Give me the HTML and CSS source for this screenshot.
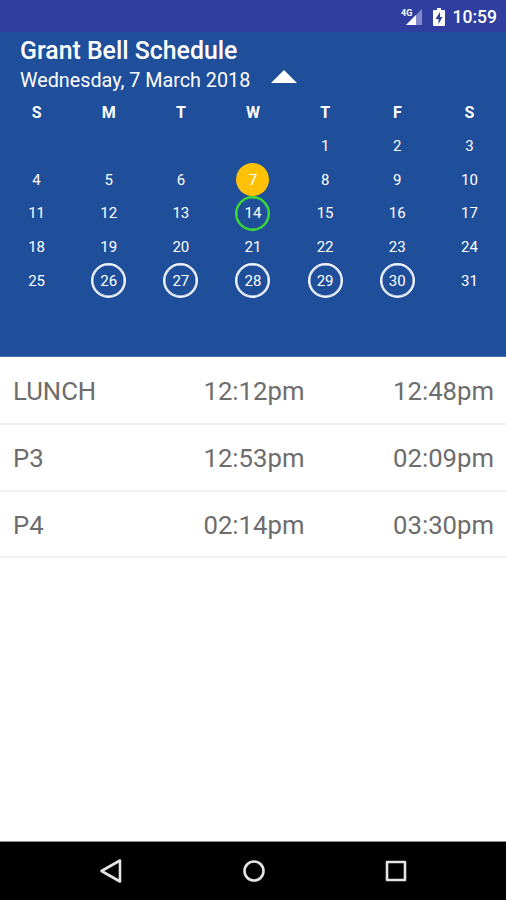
FILE: index.html
```html
<!DOCTYPE html>
<html lang="en"><head><meta charset="utf-8"><title>Grant Bell Schedule</title><link rel="stylesheet" href="styles.css"></head>
<body>
<div class="status">
<svg class="signal" width="22" height="20" viewBox="0 0 22 20"><path d="M21 2V18H5Z" fill="#8587cb"/><path d="M15 8V18H5Z" fill="#fff"/><text x="0" y="9">4G</text></svg>
<svg class="battery" width="12" height="18" viewBox="0 0 12 18"><path d="M4 0h4v2h3q1 0 1 1v14q0 1-1 1H1q-1 0-1-1V3q0-1 1-1h3z" fill="#fff"/><path d="M7 4L2.5 11H5.5V16L9.5 9H7z" fill="#303f9f"/></svg>
<span>10:59</span></div>
<header class="panel">
<h1>Grant Bell Schedule</h1>
<div class="date"><span>Wednesday, 7 March 2018</span><svg width="26" height="13" viewBox="0 0 26 13"><path d="M0 13L13 0L26 13z" fill="#fff"/></svg></div>
<div class="cal">
<b>S</b><b>M</b><b>T</b><b>W</b><b>T</b><b>F</b><b>S</b>
<i></i><i></i><i></i><i></i><i>1</i><i>2</i><i>3</i>
<i>4</i><i>5</i><i>6</i><i><span class="day today">7</span></i><i>8</i><i>9</i><i>10</i>
<i>11</i><i>12</i><i>13</i><i><span class="day green">14</span></i><i>15</i><i>16</i><i>17</i>
<i>18</i><i>19</i><i>20</i><i>21</i><i>22</i><i>23</i><i>24</i>
<i>25</i><i><span class="day">26</span></i><i><span class="day">27</span></i><i><span class="day">28</span></i><i><span class="day">29</span></i><i><span class="day">30</span></i><i>31</i>
</div></header>
<main>
<div class="row"><span>LUNCH</span><span>12:12pm</span><span>12:48pm</span></div>
<div class="row"><span>P3</span><span>12:53pm</span><span>02:09pm</span></div>
<div class="row"><span>P4</span><span>02:14pm</span><span>03:30pm</span></div>
</main>
<nav>
<svg width="24" height="24" viewBox="0 0 24 24"><path d="M21 1.5V22.5L2.500 12z"/></svg>
<svg width="24" height="24" viewBox="0 0 24 24"><circle cx="12" cy="12" r="9.5"/></svg>
<svg width="24" height="24" viewBox="0 0 24 24"><path d="M3 3h18v18H3z"/></svg>
</nav>
</body></html>
```
FILE: styles.css
```css
*{box-sizing:border-box}
body{margin:0;width:506px;height:900px;display:flex;flex-direction:column;background:#fff;font-family:Roboto,sans-serif;overflow:hidden}
.status{height:32px;background:#303f9f;color:#fff;display:flex;align-items:center;justify-content:flex-end;padding:1px 9px 0 0;font-size:17.5px;font-weight:500}
.signal{margin-right:10px}
.signal text{font:bold 9px Roboto,sans-serif;fill:#fff}
.battery{margin-right:8px}
.panel{height:325px;background:#1f4e9a;color:#fff;border-bottom:1px solid #4870ad}
h1{margin:0;padding:4px 0 0 20px;font-size:24.85px;line-height:30px;font-weight:500;height:33px}
.date{display:flex;align-items:center;height:30px;padding-left:20px;font-size:19.75px}
.date svg{margin:-8px 0 0 21px}
.cal{display:grid;grid-template-columns:repeat(7,72.15px);grid-template-rows:34.2px repeat(5,33.7px);margin-left:.5px;font-size:15px}
.cal b,.cal i{display:flex;align-items:center;justify-content:center;font-style:normal}
.cal b{font-size:16px;padding-top:1px}
.day{flex:none;width:35px;height:35px;border:2.5px solid #f2f5fb;border-radius:50%;display:flex;align-items:center;justify-content:center;box-shadow:inset 0 0 0 .5px #f2f5fb}
.today{width:33px;height:33px;border:0;background:#ffc107;box-shadow:none}
.green{border-color:#3ddc35;box-shadow:inset 0 0 0 .5px #3ddc35}
main{flex:1}
.row{height:66.5px;display:grid;grid-template-columns:190.5px 1fr auto;align-items:center;padding:2px 12px 0 13px;font-size:25.7px;color:#6d6d6d;border-bottom:2px solid #f2f2f2}
.row:first-child{height:68px}
nav{height:59px;background:#000;border-top:1px solid #888;display:flex;align-items:center;justify-content:center;gap:118.5px;padding-left:1px}
nav svg{fill:none;stroke:#e4e4e4;stroke-width:2.6;stroke-linejoin:round}
```
